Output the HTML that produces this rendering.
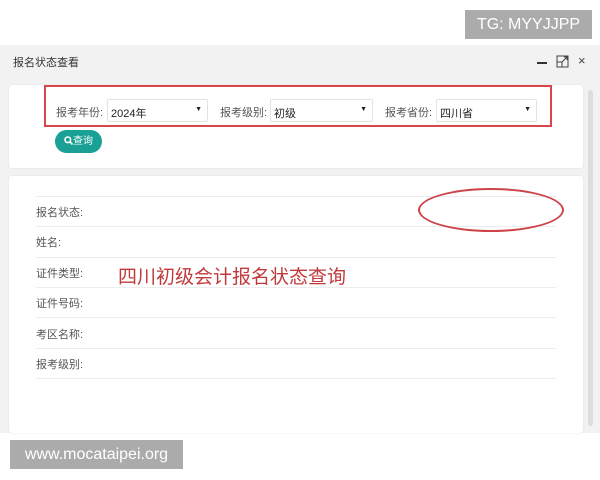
<!DOCTYPE html>
<html><head><meta charset="utf-8"><style>
*{margin:0;padding:0;box-sizing:border-box}
body{width:600px;height:480px;background:#fff;position:relative;overflow:hidden;font-family:"Liberation Sans","Noto Sans CJK SC",sans-serif;color:#333}
.a{position:absolute}
.win{left:0;top:45px;width:600px;height:388px;background:#f2f2f2}
.card{background:#fff;border-radius:3px;box-shadow:0 0 2px rgba(0,0,0,.08)}
.lbl{font-size:11px;color:#555}
.sel{background:#fff;border:1px solid #e2e2e2;border-radius:2px;height:23px;font-size:11px;padding:5px 0 0 3px;color:#222}
.sel:after{content:"▼";position:absolute;right:5px;top:6px;font-size:7px}
.line{left:36px;width:520px;height:1px;background:#ececec}
.row{left:36px;font-size:11px;color:#555}
</style></head><body>
<div class="a" style="left:465px;top:10px;width:127px;height:29px;background:#ababab;color:#fff;font-size:16px;line-height:29px;text-align:center">TG: MYYJJPP</div>
<div class="a win"></div>
<div class="a" style="left:13px;top:54px;font-size:11px;color:#333">报名状态查看</div>
<div class="a" style="left:537px;top:62px;width:10px;height:2px;background:#333"></div>
<svg class="a" style="left:556px;top:55px" width="13" height="13" viewBox="0 0 13 13" fill="none" stroke="#444" stroke-width="1"><rect x="1" y="1" width="11" height="11"/><rect x="1" y="7" width="5" height="5"/><path d="M6 7L11 2M8 2H11V5"/></svg>
<div class="a" style="left:578px;top:53px;font-size:13px;color:#444">×</div>
<div class="a" style="left:588px;top:90px;width:5px;height:336px;background:#ddd;border-radius:3px"></div>
<div class="a card" style="left:9px;top:85px;width:574px;height:83px"></div>
<div class="a card" style="left:9px;top:176px;width:574px;height:257px"></div>
<div class="a" style="left:44px;top:85px;width:508px;height:42px;border:2px solid #d9464a"></div>
<div class="a lbl" style="left:56px;top:104px">报考年份:</div>
<div class="a sel" style="left:107px;top:99px;width:101px">2024年</div>
<div class="a lbl" style="left:220px;top:104px">报考级别:</div>
<div class="a sel" style="left:270px;top:99px;width:103px">初级</div>
<div class="a lbl" style="left:385px;top:104px">报考省份:</div>
<div class="a sel" style="left:436px;top:99px;width:101px">四川省</div>
<div class="a" style="left:55px;top:130px;width:47px;height:23px;background:#1aa094;border-radius:12px;color:#fff;font-size:10px;line-height:23px;text-align:center"><svg width="9" height="9" viewBox="0 0 9 9" style="vertical-align:-1px" fill="none" stroke="#fff" stroke-width="1.6"><circle cx="3.8" cy="3.8" r="2.8"/><path d="M6 6L8.5 8.5"/></svg>查询</div>
<div class="a line" style="top:196px"></div>
<div class="a line" style="top:226px"></div>
<div class="a line" style="top:257px"></div>
<div class="a line" style="top:287px"></div>
<div class="a line" style="top:317px"></div>
<div class="a line" style="top:348px"></div>
<div class="a line" style="top:378px"></div>
<div class="a row" style="top:204px">报名状态:</div>
<div class="a row" style="top:234px">姓名:</div>
<div class="a row" style="top:265px">证件类型:</div>
<div class="a row" style="top:295px">证件号码:</div>
<div class="a row" style="top:326px">考区名称:</div>
<div class="a row" style="top:356px">报考级别:</div>
<div class="a" style="left:118px;top:262px;font-size:19px;color:#c0393b">四川初级会计报名状态查询</div>
<div class="a" style="left:418px;top:188px;width:146px;height:44px;border:2px solid #cc4448;border-radius:50%"></div>
<div class="a" style="left:10px;top:440px;width:173px;height:29px;background:#ababab;color:#fff;font-size:16px;line-height:29px;text-align:center">www.mocataipei.org</div>
</body></html>
